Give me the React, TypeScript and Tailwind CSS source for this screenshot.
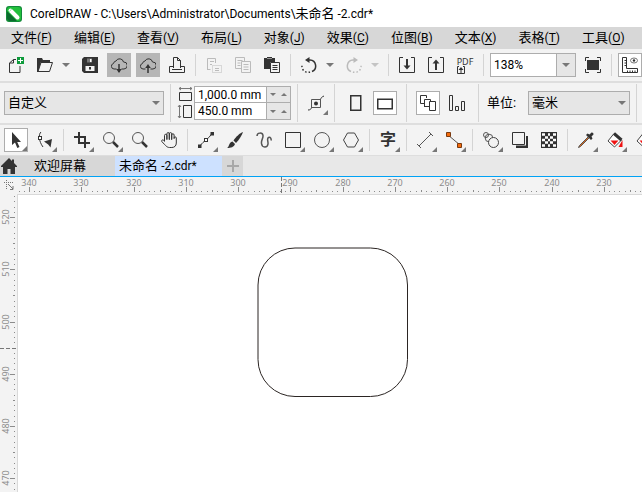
import { useEffect, useState } from "react";
import type { ReactNode } from "react";

const MENUS = [
  ["文件", "F"],
  ["编辑", "E"],
  ["查看", "V"],
  ["布局", "L"],
  ["对象", "J"],
  ["效果", "C"],
  ["位图", "B"],
  ["文本", "X"],
  ["表格", "T"],
  ["工具", "O"],
];

// Screen pixels for ten millimetres at the current zoom
const TEN_MM = 52.25;

export default function App() {
  const [zoom, setZoom] = useState("138%");
  const [width, setWidth] = useState("1,000.0 mm");
  const [height, setHeight] = useState("450.0 mm");
  const [tool, setTool] = useState("pick");
  const view = useWindowSize();

  return (
    <div className="flex min-h-screen flex-col overflow-hidden bg-[#f3f3f3] font-['Roboto','Noto_Sans_CJK_SC',sans-serif] text-[12px] text-black">
      <header className="flex h-[27px] shrink-0 items-center gap-2 bg-white pl-[6px]">
        <AppLogo />
        <h1 className="whitespace-nowrap">
          CorelDRAW - C:\Users\Administrator\Documents\
          <span className="text-[13px]">未命名</span> -2.cdr*
        </h1>
      </header>

      <nav className="flex h-[22px] shrink-0 items-center gap-[22px] bg-[#d7d7d7] pl-[11px]">
        {MENUS.map(([label, key]) => (
          <button key={key} type="button" className="shrink-0 whitespace-nowrap text-[12px]">
            <span className="text-[13px]">{label}</span>(<u className="underline-offset-2">{key}</u>)
          </button>
        ))}
      </nav>

      <div className="flex h-8 shrink-0 items-center gap-[5px] pl-1">
        <Tool label="New">
          <path d="M8 2.5H5.5L1.5 6v9.5H12V9M5.5 2.5V6h-4" />
          <rect x="9" y="0" width="7" height="7" fill="#0e9b3c" stroke="none" />
          <path d="M10 3.5h5M12.5 1v5" stroke="#fff" />
        </Tool>
        <Tool label="Open">
          <path d="M0 1h5l1 2h7v2H4L1 15H0z" fill="#333" stroke="none" />
          <path d="M1 14.5 4 5.500h11.500l-3 9z" />
        </Tool>
        <DropArrow label="Open recent" />
        <Tool label="Save">
          <path d="M2 0h14v16H2l-2-2V2z" fill="#333" stroke="none" />
          <rect x="3.5" y="9" width="9" height="5" fill="#f3f3f3" stroke="none" />
          <rect x="5" y="1.5" width="5" height="4" fill="#777" stroke="none" />
          <rect x="8" y="2" width="1.5" height="3" fill="#fff" stroke="none" />
          <rect x="7" y="10" width="2" height="2.5" fill="#333" stroke="none" />
        </Tool>
        <Tool label="Download from cloud" pressed>
          <path d="M5.5 12H3a2.8 2.8 0 0 1-.5-5.5A3 3 0 0 1 5 4a4 4 0 0 1 7.5 1A3.4 3.4 0 0 1 13 12h-2.500" />
          <path d="M8 7v8" strokeWidth="1.5" />
          <path d="M5.2 12h5.600L8 16z" fill="#333" stroke="none" />
        </Tool>
        <Tool label="Upload to cloud" pressed>
          <path d="M5.5 12H3a2.8 2.8 0 0 1-.5-5.5A3 3 0 0 1 5 4a4 4 0 0 1 7.5 1A3.4 3.4 0 0 1 13 12h-2.5" />
          <path d="M8 10v6" strokeWidth="1.5" />
          <path d="M5.2 11h5.600L8 7z" fill="#333" stroke="none" />
        </Tool>
        <Tool label="Print">
          <path d="M4.5 11V.5h4l3 3V11M8.5.5v3h3M4.5 9.500h-4v6h15v-6h-4M3 12.500h10" />
        </Tool>
        <Divider />
        <Tool label="Cut" faded>
          <path d="M1.5 13V1.500h8V6M4 4.500h4M4 7.500h2M1.500 12.500h3" />
          <path d="M6.5 8.500h9v7h-9z" strokeDasharray="1 1" />
          <path d="M9 11.500h4M9 13.500h4" />
        </Tool>
        <Tool label="Copy" faded>
          <path d="M6 11.500H.500v-11h9V4M2.500 3.500h5M2.500 6h3M2.500 8.500h3" />
          <path d="M6.500 4.500h9v11h-9zM8.500 7.500h5M8.500 10h5M8.500 12.500h5" />
        </Tool>
        <Tool label="Paste">
          <path d="M0 1h3V0h5v1h3v4H6v7H0z" fill="#333" stroke="none" />
          <path d="M3 1.500h5" stroke="#999" />
          <path d="M6.500 5.500h9v10h-9zM8.500 8.500h5M8.500 10.500h5M8.500 12.500h5" />
        </Tool>
        <Divider />
        <Tool label="Undo">
          <path d="M6 3h3a6 6 0 0 1 2 11.500" strokeWidth="1.5" />
          <path d="M9 15a6 6 0 0 1-8-6.500" strokeWidth="1.5" strokeDasharray="1.5 2" />
          <path d="M4 3 8.500 0v6z" fill="#333" stroke="none" />
        </Tool>
        <DropArrow label="Undo history" />
        <Tool label="Redo" faded>
          <path d="M10 3H7a6 6 0 0 0-2 11.500" strokeWidth="1.5" />
          <path d="M7 15a6 6 0 0 0 8-6.500" strokeWidth="1.5" strokeDasharray="1.5 2" />
          <path d="M12 3 7.500 0v6z" fill="#bbb" stroke="none" />
        </Tool>
        <DropArrow label="Redo history" faded />
        <Divider />
        <Tool label="Import">
          <path d="M4 .500H.500v15h15V.500H12" />
          <path d="M8 2v8" strokeWidth="2" />
          <path d="M4.500 8.500h7L8 12.500z" fill="#333" stroke="none" />
        </Tool>
        <Tool label="Export">
          <path d="M4 .500H.500v15h15V.500H12" />
          <path d="M8 5v8" strokeWidth="2" />
          <path d="M4.500 6.500h7L8 2.500z" fill="#333" stroke="none" />
        </Tool>
        <button
          type="button"
          className="flex w-6 shrink-0 flex-col items-center font-['Noto_Sans',sans-serif] text-[9px] leading-[9px] text-[#333]"
        >
          PDF
          <svg viewBox="0 0 8 8" className="mr-2 size-2" fill="none" stroke="#333">
            <path d="M2 .500H.500v7h7v-7H6M4 2v6" />
            <path d="M1.500 4h5L4 1z" fill="#333" stroke="none" />
          </svg>
        </button>
        <Divider />
        <div className="flex h-6 w-[86px] shrink-0 border border-[#adadad] bg-white">
          <input
            aria-label="Zoom level"
            value={zoom}
            onChange={(event) => setZoom(event.target.value)}
            className="w-0 grow pl-[3px] text-[12px] outline-none"
          />
          <button
            type="button"
            aria-label="Zoom presets"
            className="flex w-[19px] items-center justify-center border-l border-[#adadad] bg-[#e6e6e6]"
          >
            <Caret />
          </button>
        </div>
        <Tool label="Full-screen preview">
          <rect x="2" y="3" width="12" height="10" fill="#333" stroke="none" />
          <path d="M.500 4V.500H4M12 .500h3.500V4M15.500 12v3.500H12M4 15.500H.500V12" />
        </Tool>
        <Divider />
        <Tool label="Show rulers" boxed>
          <path d="M.500.500h4v11h11v4H.500zM2.500 3.500h2M2.500 6h2M2.500 8.500h2M5.500 13.500v2M8 13.500v2M10.500 13.500v2M13 13.500v2" />
          <ellipse cx="12" cy="3.5" rx="3.5" ry="2.5" stroke="#777" />
          <circle cx="12" cy="3.5" r="1.2" fill="#333" stroke="none" />
        </Tool>
      </div>

      <div className="flex h-[42px] shrink-0 items-center gap-[5px] border-t-2 border-[#dedede] pl-1">
        <Select label="Page size" className="w-[160px]" options={["自定义", "A4", "A3"]} />
        <Divider tall />
        <div className="flex shrink-0 items-center gap-px">
          <svg viewBox="0 0 16 32" className="h-8 w-4" fill="none" stroke="#333">
            <path d="M2.500 5.500h12v8h-12z" />
            <path d="M2 1.500h13M4 0 2 1.500 4 3M13 0l2 1.500L13 3" stroke="#777" />
            <path d="M6.500 18.500h8v12h-8z" />
            <path d="M2.500 18v13M1 20l1.500-2L4 20M1 29l1.500 2L4 29" stroke="#777" />
          </svg>
          <div className="flex w-[97px] flex-col divide-y divide-[#adadad] border border-[#adadad]">
            <Dimension label="Page width" value={width} onChange={setWidth} />
            <Dimension label="Page height" value={height} onChange={setHeight} />
          </div>
        </div>
        <Divider tall />
        <Tool label="Nudge and snap" flyout>
          <path d="M3.500 4.500h9v8h-9z" stroke="#555" />
          <circle cx="8" cy="8.5" r="2" fill="#333" stroke="none" />
          <path d="M0 15c2.500 0 3-1 3.500-2.500M12.500 4.500C13 3 13.500 2 16 1" />
        </Tool>
        <Divider tall />
        <div className="flex gap-[5px] px-[3px]">
          <Tool label="Portrait">
            <path d="M2.75.75h10v14.500h-10z" strokeWidth="1.5" />
          </Tool>
          <Tool label="Landscape" boxed>
            <path d="M.75 4.250h14.500v9.500H.75z" strokeWidth="1.5" />
          </Tool>
        </div>
        <Divider tall />
        <div className="flex gap-[5px] px-[3px]">
          <Tool label="All pages" boxed>
            <path d="M4 8.500H.500v-8h6V3M4.500 12V4.500h6V6M4.500 11.500H9M9.500 6.500h6v9h-6z" />
          </Tool>
          <Tool label="Current page">
            <path d="M.5.5h3v15h-3zM6.500 11.500h3v4h-3zM12.500 6.500h3v9h-3z" />
          </Tool>
        </div>
        <Divider tall />
        <label htmlFor="units" className="w-[38px] shrink-0 whitespace-nowrap pl-[2px] text-[13px]">
          单位:
        </label>
        <Select id="units" className="w-[102px]" options={["毫米", "厘米", "英寸"]} />
        <Divider tall />
      </div>

      <div className="flex h-8 shrink-0 items-center gap-[5px] border-t-2 border-[#dedede] pl-1">
        <Tool label="Pick" flyout boxed={tool === "pick"} onClick={() => setTool("pick")}>
          <path d="M4 0v13l3-2.500 2.300 5.500 2.200-1-2.300-5H13z" fill="#333" stroke="none" />
        </Tool>
        <Tool label="Shape" flyout>
          <path d="M4 0C1.500 2 1.500 9 6 15" />
          <rect x="1.5" y="4.5" width="3" height="3" fill="#fff" />
          <path d="M7 9.500 15 7l-1.500 8.500-2.300-3z" fill="#333" stroke="none" />
        </Tool>
        <Divider />
        <Tool label="Crop" flyout>
          <path d="M5 0v11h11M0 5h11v11" strokeWidth="2" />
        </Tool>
        <Tool label="Zoom" flyout>
          <circle cx="6" cy="6" r="5.5" stroke="#555" />
          <path d="m10 10 5 5" strokeWidth="2.5" />
        </Tool>
        <Tool label="Zoom once">
          <circle cx="6" cy="6" r="5.5" stroke="#555" />
          <path d="m10 10 5 5" strokeWidth="2.5" />
        </Tool>
        <Tool label="Pan">
          <path d="M3.500 9V3.500a1.200 1.200 0 0 1 2.400 0V8M5.900 7V1.800a1.200 1.200 0 0 1 2.400 0V8M8.300 7V1.800a1.200 1.200 0 0 1 2.400 0V8M10.700 7V3a1.200 1.200 0 0 1 2.400 0V7M13.100 6a1.100 1.100 0 0 1 2.200 0v5c0 3-2 4.500-4.500 4.500H8.500C6 15.500 5 14 .8 9.500c-.6-1 .5-2 1.500-1.400L4 9.500" />
        </Tool>
        <Divider />
        <Tool label="Freehand" flyout>
          <path d="M2 14C4 11 6 9.500 8 8s3.500-3 5.500-6" />
          <path d="M0 12.500h3.500V16H0zM12.500 0H16v3.500h-3.500z" fill="#333" stroke="none" />
          <rect x="6.5" y="6.5" width="3" height="3" fill="#fff" />
        </Tool>
        <Tool label="Artistic media">
          <path d="M16 0c-3 1-7 4.500-9.500 8.500L9 11c3.500-3.500 6-8 7-11z" fill="#333" stroke="none" />
          <path d="M5.500 9.500 8 12c-1 3-4 4-8 4 2.500-1 1.500-5.500 5.500-6.500z" fill="#333" stroke="none" />
        </Tool>
        <Tool label="Live sketch">
          <path
            d="M1 4C1 .5 6.500 0 7 3.500 7.300 6.500 5 8 5.500 11.500c.5 4.500 6 4.500 6.500.5.300-3-1.500-5.500.5-6.500 2-.8 3 1.500 2.500 3"
            strokeWidth="1.5"
            stroke="#555"
          />
        </Tool>
        <Tool label="Rectangle" flyout>
          <path d="M.500.500h15v15H.500z" />
        </Tool>
        <Tool label="Ellipse" flyout>
          <circle cx="8" cy="8" r="7.5" stroke="#555" />
        </Tool>
        <Tool label="Polygon" flyout>
          <path d="M4.500 1h7l4 7-4 7h-7l-4-7z" stroke="#444" />
        </Tool>
        <Divider />
        <button
          type="button"
          aria-label="Text"
          className="relative size-6 shrink-0 text-[16px] leading-6 font-bold text-[#333]"
        >
          字
          <FlyoutMark />
        </button>
        <Divider />
        <Tool label="Dimension" flyout>
          <path d="m2 14 12-12M0 12l4 4M12 0l4 4" stroke="#555" />
        </Tool>
        <Tool label="Connector" flyout>
          <path d="m2 3 12 10" stroke="#555" />
          <path d="M.500.500h4v4h-4zM11.500 11.500h4v4h-4z" fill="#f36b0c" stroke="#7a3a10" />
        </Tool>
        <Divider />
        <Tool label="Blend" flyout>
          <circle cx="3" cy="3" r="2.5" stroke="#555" />
          <circle cx="6" cy="6" r="3.8" stroke="#555" />
          <circle cx="10.5" cy="10.5" r="5" fill="#f3f3f3" stroke="#444" />
        </Tool>
        <Tool label="Drop shadow">
          <path d="M4 13.500h10V4h2v12H4z" fill="#333" stroke="none" />
          <path d="M.500.500h12v12H.500z" fill="#f3f3f3" />
        </Tool>
        <Tool label="Transparency">
          <rect x="0" y="0" width="16" height="16" fill="#333" stroke="none" />
          <path
            d="M1 2.500h3m3 0h2m3 0h3M4 5.500h3m2 0h3M1 8h3m3 0h2m3 0h3M4 10.500h3m2 0h3M1 13.500h3m3 0h2m3 0h3"
            stroke="#fff"
            strokeWidth="2.5"
          />
        </Tool>
        <Divider />
        <Tool label="Colour eyedropper" flyout>
          <path d="m10 5-8.500 8.500L.500 15.500l2-1L11 6" fill="#e06a1b" stroke="#555" />
          <path d="m8 3 1.500-1.500 2 1L13.500.500a1.800 1.800 0 0 1 2 2L13.500 4.500l1 2L13 8z" fill="#333" stroke="none" />
        </Tool>
        <Tool label="Interactive fill" flyout>
          <path d="M7 1.500 1 9l6.500 6 7-7z" fill="#fff" stroke="#444" />
          <path d="M3.500 8.500h8l-4 4.500z" fill="#e11" stroke="none" />
          <path d="M7 1.500 14.500 8" strokeWidth="3" />
          <path d="M15.500 8v7h-4z" fill="#e11" stroke="none" />
        </Tool>
        <Tool label="Smart fill">
          <path d="M7 1.500 1 9l6.500 6 7-7z" fill="#fff" stroke="#444" />
          <path d="M3.500 8.500h8l-4 4.500z" fill="#e11" stroke="none" />
        </Tool>
      </div>

      <div className="flex h-[21px] shrink-0 border-t border-[#dedede] bg-[#e8e8e8] text-[13px]">
        <div className="flex w-[115px] items-center bg-[#d7d7d7]">
          <button type="button" aria-label="Home" className="w-[34px] pl-[1px]">
            <svg viewBox="0 0 16 16" className="size-4" fill="#333">
              <path d="M8 0 0 8v1h2v7h4.500v-5h3v5H14V9h2V8l-3-3V1.500h-2V3z" />
            </svg>
          </button>
          <button type="button" className="whitespace-nowrap">
            欢迎屏幕
          </button>
        </div>
        <button type="button" className="w-[107px] shrink-0 whitespace-nowrap bg-[#cde1ff] pl-1 text-left">
          未命名 <span className="text-[12px]">-2.cdr*</span>
        </button>
        <button
          type="button"
          aria-label="New tab"
          className="flex w-[21px] shrink-0 items-center justify-center bg-[#d7d7d7]"
        >
          <svg viewBox="0 0 12 12" className="size-3" stroke="#a8a8a8" strokeWidth="2">
            <path d="M0 6h12M6 0v12" />
          </svg>
        </button>
      </div>

      <div className="flex h-[18px] shrink-0 border-t border-[#00a2f5]">
        <div className="w-[18px] shrink-0 pt-[3px] pl-1">
          <svg viewBox="0 0 10 12" className="h-3 w-[10px]" fill="none" stroke="#777">
            <path d="M0 2.500h10M2.500 0v10" strokeDasharray="1 1" />
            <path d="m4 4 5 5M9 6v3.500H6" />
          </svg>
        </div>
        <HorizontalRuler length={view.width - 18} />
      </div>

      <main className="flex grow">
        <VerticalRuler length={view.height - 194} />
        <div className="flex grow border-t border-l border-[#d9d9d9] bg-white">
          <svg className="min-h-[290px] w-full">
            <rect x="240" y="53" width="149.5" height="148.5" rx="37" fill="none" stroke="#2b2523" />
          </svg>
        </div>
      </main>
    </div>
  );
}

function useWindowSize() {
  const [size, setSize] = useState({ width: window.innerWidth, height: window.innerHeight });

  useEffect(() => {
    const update = () => setSize({ width: window.innerWidth, height: window.innerHeight });
    window.addEventListener("resize", update);
    return () => window.removeEventListener("resize", update);
  }, []);

  return size;
}

function AppLogo() {
  return (
    <svg viewBox="0 0 16 16" className="size-4 shrink-0">
      <rect width="16" height="16" rx="3" fill="#138a3a" />
      <rect x="1" y="1" width="14" height="14" rx="3" fill="#22c03c" />
      <path d="M1 5v7a3 3 0 0 0 3 3h7z" fill="#0b6b2e" />
      <path d="m4.500 4.500 7 7" stroke="#fff" strokeWidth="4" strokeLinecap="round" />
      <path d="M3 5.500c1-.3 2-1.300 2.500-2.500" stroke="#9ddfae" fill="none" />
    </svg>
  );
}

function Tool({
  label,
  children,
  pressed,
  boxed,
  faded,
  flyout,
  onClick,
}: {
  label: string;
  children: ReactNode;
  pressed?: boolean;
  boxed?: boolean;
  faded?: boolean;
  flyout?: boolean;
  onClick?: () => void;
}) {
  return (
    <button
      type="button"
      aria-label={label}
      onClick={onClick}
      className={[
        "relative flex size-6 shrink-0 items-center justify-center",
        pressed ? "bg-[#b6b6b6]" : "",
        boxed ? "border border-[#adadad] bg-white" : "",
      ].join(" ")}
    >
      <svg viewBox="0 0 16 16" className="size-4 shrink-0" fill="none" stroke={faded ? "#bbb" : "#333"}>
        {children}
      </svg>
      {flyout ? <FlyoutMark /> : null}
    </button>
  );
}

function FlyoutMark() {
  return (
    <svg viewBox="0 0 5 5" className="absolute right-0 bottom-0 size-[5px]" fill="#777">
      <path d="M5 0v5H0z" />
    </svg>
  );
}

function Divider({ tall }: { tall?: boolean }) {
  return (
    <div className="flex w-[3px] shrink-0 justify-center">
      <div className={tall ? "h-[38px] w-px bg-[#d4d4d4]" : "h-[22px] w-px bg-[#d4d4d4]"} />
    </div>
  );
}

function Caret({ faded }: { faded?: boolean }) {
  return (
    <svg viewBox="0 0 8 4" className="h-1 w-2" fill={faded ? "#c4c4c4" : "#777"}>
      <path d="M0 0h8L4 4z" />
    </svg>
  );
}

function DropArrow({ label, faded }: { label: string; faded?: boolean }) {
  return (
    <button type="button" aria-label={label} className="flex h-6 w-[11px] shrink-0 items-center">
      <Caret faded={faded} />
    </button>
  );
}

function Select({
  id,
  label,
  options,
  className,
}: {
  id?: string;
  label?: string;
  options: string[];
  className: string;
}) {
  return (
    <div className={`relative shrink-0 ${className}`}>
      <select
        id={id}
        aria-label={label}
        className="block h-6 w-full appearance-none border border-[#adadad] bg-[#e6e6e6] pl-[3px] text-[13px] outline-none"
      >
        {options.map((option) => (
          <option key={option}>{option}</option>
        ))}
      </select>
      <span className="pointer-events-none absolute inset-y-0 right-1 flex items-center">
        <Caret />
      </span>
    </div>
  );
}

function Dimension({
  label,
  value,
  onChange,
}: {
  label: string;
  value: string;
  onChange: (value: string) => void;
}) {
  return (
    <div className="flex h-4 bg-white">
      <input
        aria-label={label}
        value={value}
        onChange={(event) => onChange(event.target.value)}
        className="w-0 grow pl-[3px] text-[12px] leading-4 outline-none"
      />
      <div className="flex w-6 items-center justify-around border-l border-[#adadad] bg-[#e6e6e6]">
        <button type="button" aria-label={`Decrease ${label}`}>
          <svg viewBox="0 0 6 3" className="h-[3px] w-[6px]" fill="#777">
            <path d="M0 0h6L3 3z" />
          </svg>
        </button>
        <button type="button" aria-label={`Increase ${label}`}>
          <svg viewBox="0 0 6 3" className="h-[3px] w-[6px]" fill="#777">
            <path d="M0 3h6L3 0z" />
          </svg>
        </button>
      </div>
    </div>
  );
}

// Ticks run one per millimetre; origin is where the first labelled one falls
function getTicks(origin: number, length: number) {
  const count = Math.max(0, Math.ceil((length / TEN_MM) * 10)) + 10;

  return Array.from({ length: count }, (_, index) => {
    const step = index - 10;
    return { step, at: Math.round(origin + (step * TEN_MM) / 10) };
  }).filter((tick) => tick.at >= 0 && tick.at < length);
}

function getLabels(origin: number, length: number) {
  return getTicks(origin, length).filter(({ step, at }) => step % 10 === 0 && at < length - 10);
}

function HorizontalRuler({ length }: { length: number }) {
  return (
    <svg className="h-full w-0 grow font-['Noto_Sans',sans-serif] text-[9px]" fill="#8c8c8c">
      {getTicks(11, length).map(({ step, at }) => {
        const size = step % 10 === 0 ? 5 : step % 5 === 0 ? 2 : 1;
        return <rect key={step} x={at} y={size === 5 ? 10 : 15 - size} width="1" height={size} />;
      })}
      {getLabels(11, length).map(({ step, at }) => (
        <text key={step} x={at} y="9" textAnchor="middle">
          {340 - step}
        </text>
      ))}
      <path d="M263.5 0v18" stroke="#777" strokeDasharray="4 2" />
    </svg>
  );
}

function VerticalRuler({ length }: { length: number }) {
  return (
    <svg className="w-[17px] shrink-0 font-['Noto_Sans',sans-serif] text-[9px]" fill="#8c8c8c">
      {getTicks(23, length).map(({ step, at }) => {
        const size = step % 10 === 0 ? 5 : step % 5 === 0 ? 2 : 1;
        return <rect key={step} x={15 - size} y={at} width={size} height="1" />;
      })}
      {getLabels(23, length).map(({ step, at }) => (
        <text key={step} transform={`translate(9 ${at}) rotate(-90)`} textAnchor="middle">
          {520 - step}
        </text>
      ))}
      <path d="M0 154.5h17" stroke="#777" strokeDasharray="4 2" />
    </svg>
  );
}
